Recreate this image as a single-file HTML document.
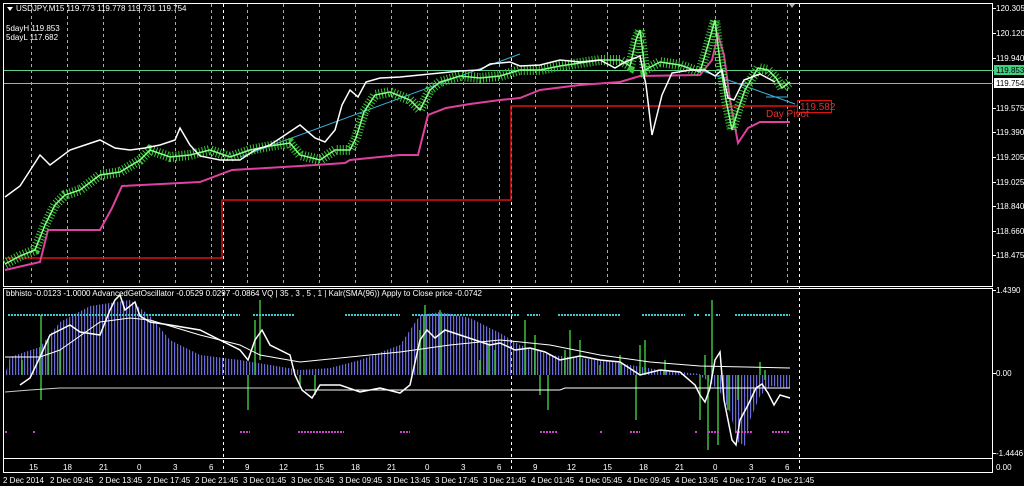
<!DOCTYPE html>
<html><head><meta charset="utf-8"><style>
body{margin:0;background:#000;width:1024px;height:486px;overflow:hidden}
svg{display:block}
text{font-family:"Liberation Sans",sans-serif;font-size:8px;fill:#fff}
</style></head><body>
<svg width="1024" height="486" viewBox="0 0 1024 486">
<defs>
<pattern id="st" width="3" height="10" patternUnits="userSpaceOnUse"><rect x="0" y="0" width="1.2" height="10" fill="#6a6ad8"/></pattern>
</defs>
<rect width="1024" height="486" fill="#000"/>
<g stroke="#aaa" stroke-width="1" stroke-dasharray="3,3">
<path d="M31.5 4V286M67.5 4V286M103.5 4V286M139.5 4V286M175.5 4V286M211.5 4V286M247.5 4V286M283.5 4V286M319.5 4V286M355.5 4V286M391.5 4V286M427.5 4V286M463.5 4V286M499.5 4V286M535.5 4V286M571.5 4V286M607.5 4V286M643.5 4V286M679.5 4V286M715.5 4V286M751.5 4V286M787.5 4V286"/>
<path d="M223.5 4V472M511.5 4V472M799.5 4V472" stroke="#fff"/>
</g>
<g fill="none" stroke="#fff" stroke-width="1">
<rect x="3.5" y="3.5" width="989" height="283"/>
<rect x="3.5" y="288.5" width="989" height="170"/>
<rect x="3.5" y="458.5" width="989" height="14"/>
</g>
<path d="M4 70.5H1024" stroke="#5fd08a"/>
<path d="M4 83.5H993" stroke="#aaa"/>
<path d="M5 258H222V200H511V106H797" fill="none" stroke="#e01010" stroke-width="1.5"/>
<polyline fill="none" stroke="#e040a0" stroke-width="2" points="5,270 40,262 48,230 100,230 112,208 122,186 200,182 232,170 300,166 345,163 350,160 400,155 418,155 428,115 446,108 470,104 500,100 520,98 540,90 580,85 620,82 640,76 700,75 712,60 718,35 724,55 730,100 738,143 748,128 760,122 790,122"/>
<path d="M240 157L520 54M700 70L795 104" stroke="#3ab0e0" stroke-width="1" fill="none"/>
<path d="M766 97H788" stroke="#3ab0e0"/>
<polyline id="gp" fill="none" stroke="#3cc83c" stroke-width="10" stroke-dasharray="1,2" points="5,264 20,256 35,250 45,225 55,205 65,195 80,190 100,175 120,172 140,160 150,150 170,157 190,155 210,150 230,157 250,150 270,146 290,143 300,155 320,160 335,150 350,150 356,138 364,112 375,95 390,92 410,100 420,110 430,90 440,82 460,76 480,78 500,76 520,70 540,70 560,66 580,63 600,60 620,60 630,66 636,40 640,30 645,70 660,62 680,65 700,72 708,45 715,20 720,62 726,100 732,130 738,110 745,90 752,78 758,68 768,70 776,78 782,88 790,82"/>
<polyline fill="none" stroke="#8f8" stroke-width="1.5" points="5,264 20,256 35,250 45,225 55,205 65,195 80,190 100,175 120,172 140,160 150,150 170,157 190,155 210,150 230,157 250,150 270,146 290,143 300,155 320,160 335,150 350,150 356,138 364,112 375,95 390,92 410,100 420,110 430,90 440,82 460,76 480,78 500,76 520,70 540,70 560,66 580,63 600,60 620,60 630,66 636,40 640,30 645,70 660,62 680,65 700,72 708,45 715,20 720,62 726,100 732,130 738,110 745,90 752,78 758,68 768,70 776,78 782,88 790,82"/>
<polyline fill="none" stroke="#fff" stroke-width="1.5" points="5,197 20,186 40,155 50,165 70,150 85,145 100,140 115,148 130,150 145,148 160,145 175,140 180,128 190,145 200,156 220,160 240,160 255,150 270,145 285,135 300,125 315,138 325,142 335,130 342,105 350,90 358,97 366,82 380,78 400,77 420,75 440,73 460,71 480,70 490,64 510,62 520,66 540,65 560,60 580,62 600,60 615,68 625,62 640,56 646,85 652,135 657,115 662,95 672,73 690,70 705,70 715,76 722,70 728,98 734,100 744,80 760,74 775,82"/>
<rect x="797.5" y="100.5" width="34" height="12" fill="none" stroke="#e01010"/>
<text x="800" y="110" style="fill:#e03030;font-size:10px">119.582</text>
<text x="766" y="117" style="fill:#e03030;font-size:10px">Day Pivot</text>
<path d="M789 4l3 4 3-4z" fill="#aaa"/>
<path d="M7 7l3 4 3-4z" fill="#fff"/>
<text x="16" y="11">USDJPY,M15  119.773 119.778 119.731 119.754</text>
<text x="6" y="31">5dayH 119.853</text>
<text x="6" y="40">5dayL 117.682</text>
<g>
<text x="996" y="11">120.305</text>
<text x="996" y="36">120.120</text>
<text x="996" y="61">119.940</text>
<rect x="994" y="65" width="30" height="10" fill="#40d080"/>
<text x="996" y="73" style="fill:#000">119.853</text>
<rect x="994" y="78" width="30" height="10" fill="#fff"/>
<text x="996" y="86" style="fill:#000">119.754</text>
<text x="996" y="111">119.575</text>
<text x="996" y="135">119.390</text>
<text x="996" y="160">119.205</text>
<text x="996" y="185">119.025</text>
<text x="996" y="209">118.840</text>
<text x="996" y="234">118.660</text>
<text x="996" y="258">118.475</text>
<text x="996" y="293">1.4390</text>
<text x="996" y="376">0.00</text>
<text x="996" y="456">-1.4446</text>
<text x="996" y="470">0.00</text>
</g>
<path d="M993 8.5h3M993 33.5h3M993 58.5h3M993 108.5h3M993 132.5h3M993 157.5h3M993 182.5h3M993 206.5h3M993 231.5h3M993 255.5h3M993 290.5h3M993 373.5h3M993 453.5h3" stroke="#fff"/>
<text x="6" y="296">bbhisto -0.0123 -1.0000  AdvancedGetOscillator -0.0529 0.0297 -0.0864  VQ | 35 , 3 , 5 , 1 |  Kalr(SMA(96)) Apply to Close price -0.0742</text>
<polygon fill="url(#st)" points="5,375 10,357 40,347 60,322 90,306 130,300 150,316 170,340 200,355 240,360 270,365 300,370 330,368 360,360 400,345 420,315 440,312 470,318 500,333 520,345 550,355 600,360 630,365 660,370 700,374 700,376 710,382 720,392 730,412 738,442 745,446 750,420 760,396 770,386 790,388 790,375"/>
<g stroke="#3cc03c" stroke-width="1.5">
<path d="M22 360V375M41 315V400M48 340V375M60 350V375M260 300V360M248 375V410M255 320V375M315 375V395M300 375V385M420 330V375M425 305V375M440 310V375M480 375V360M488 345V375M495 350V375M525 320V375M535 335V375M540 375V395M548 375V410M565 350V375M570 330V375M580 340V375M600 365V375M620 355V375M636 375V420M640 345V375M645 340V375M665 360V375M700 375V420M705 355V375M708 375V450M712 300V375M718 375V445M728 375V410M738 375V400M760 362V375M765 370V380"/>
</g>
<path d="M8 315H240M253 315H295M345 315H400M412 315H520M527 315H540M558 315H620M642 315H685M694 315H700M705 315H710M716 315H720M735 315H790" stroke="#40c8d0" stroke-width="2" stroke-dasharray="2,1"/>
<path d="M5 432H8M33 432H36M240 432H250M298 432H344M400 432H410M540 432H557M600 432H603M630 432H640M695 432H698M708 432H720M735 432H752M772 432H790" stroke="#d040d0" stroke-width="2" stroke-dasharray="2,1"/>
<polyline fill="none" stroke="#fff" stroke-width="1" points="5,357 40,357 60,350 100,322 130,318 150,320 200,335 240,345 260,355 300,362 350,357 400,352 450,345 500,340 550,345 600,355 650,362 700,366 790,368"/>
<path d="M305 390H560L565 388H790" stroke="#fff" fill="none"/>
<path d="M5 392L30 390L60 388H300" stroke="#fff" fill="none" opacity="0.8"/>
<polyline fill="none" stroke="#fff" stroke-width="1.5" points="20,385 30,378 40,357 50,335 60,330 70,325 80,332 100,335 110,310 115,300 120,295 125,310 135,302 140,316 150,322 170,325 200,330 220,340 240,350 248,360 255,340 262,330 270,345 290,355 295,375 302,390 312,398 320,385 340,385 360,392 380,388 400,393 410,385 420,340 427,330 435,338 445,330 460,335 475,340 490,345 500,343 515,350 530,348 545,352 560,360 580,356 600,360 620,362 640,375 660,370 680,372 695,385 700,395 705,402 710,388 715,360 720,352 724,400 732,440 736,445 740,420 748,405 756,388 762,384 768,393 774,405 780,395 790,398"/>
<g style="font-size:10px">
<text x="29" y="470">15</text><text x="63" y="470">18</text><text x="99" y="470">21</text><text x="137" y="470">0</text><text x="173" y="470">3</text><text x="209" y="470">6</text><text x="245" y="470">9</text><text x="279" y="470">12</text><text x="315" y="470">15</text><text x="351" y="470">18</text><text x="387" y="470">21</text><text x="425" y="470">0</text><text x="461" y="470">3</text><text x="497" y="470">6</text><text x="533" y="470">9</text><text x="567" y="470">12</text><text x="603" y="470">15</text><text x="639" y="470">18</text><text x="675" y="470">21</text><text x="713" y="470">0</text><text x="749" y="470">3</text><text x="785" y="470">6</text>
</g>
<g>
<text x="3" y="483">2 Dec 2014</text><text x="50" y="483">2 Dec 09:45</text><text x="99" y="483">2 Dec 13:45</text><text x="147" y="483">2 Dec 17:45</text><text x="195" y="483">2 Dec 21:45</text><text x="243" y="483">3 Dec 01:45</text><text x="291" y="483">3 Dec 05:45</text><text x="339" y="483">3 Dec 09:45</text><text x="387" y="483">3 Dec 13:45</text><text x="435" y="483">3 Dec 17:45</text><text x="483" y="483">3 Dec 21:45</text><text x="531" y="483">4 Dec 01:45</text><text x="579" y="483">4 Dec 05:45</text><text x="627" y="483">4 Dec 09:45</text><text x="675" y="483">4 Dec 13:45</text><text x="723" y="483">4 Dec 17:45</text><text x="771" y="483">4 Dec 21:45</text>
</g>
</svg>
</body></html>
